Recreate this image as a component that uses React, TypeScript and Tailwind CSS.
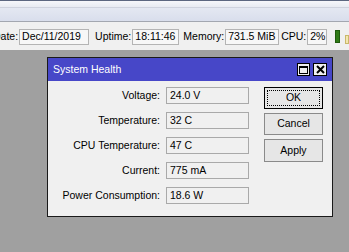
function StatusField({ label, value, width }: { label: string; value: string; width: string }) {
  return (
    <div className="flex items-center">
      <span className="mr-px">{label}</span>
      <div className={`${width} h-[16px] border border-[#b4b4b4] bg-[#f7f7f7] flex items-center pl-[2px] leading-none`}>
        {value}
      </div>
    </div>
  );
}

const rows = [
  { label: 'Voltage:', value: '24.0 V' },
  { label: 'Temperature:', value: '32 C' },
  { label: 'CPU Temperature:', value: '47 C' },
  { label: 'Current:', value: '775 mA' },
  { label: 'Power Consumption:', value: '18.6 W' },
];

function App() {
  return (
    <div className="w-[349px] h-[252px] overflow-hidden flex flex-col bg-[#a0a0a0] font-['Liberation_Sans',Arial,sans-serif] text-black">
      {/* toolbar strip */}
      <div className="h-[22px] flex flex-col border-b border-[#a3a7b0]">
        <div className="h-px bg-[#5c6780]" />
        <div className="h-[6px] bg-gradient-to-b from-[#f6f7fa] to-[#e8ebf2]" />
        <div className="h-px bg-[#cfd3de]" />
        <div className="flex-1 bg-gradient-to-b from-[#e4e8f2] to-[#d9deec]" />
      </div>

      {/* status bar */}
      <div className="h-[28px] bg-[#f0f0f0] flex items-center text-[10.5px] -ml-[7px] pt-[1px]">
        <StatusField label="Date:" value="Dec/11/2019" width="w-[70px]" />
        <div className="ml-[6px]">
          <StatusField label="Uptime:" value="18:11:46" width="w-[47px]" />
        </div>
        <div className="ml-[4px]">
          <StatusField label="Memory:" value="731.5 MiB" width="w-[54px]" />
        </div>
        <div className="ml-[2px]">
          <StatusField label="CPU:" value="2%" width="w-[20px]" />
        </div>
        <div className="ml-[8px] w-[10px] h-[13px] bg-[#2f7a16] border border-[#1e5a0c]" />
        <div className="ml-[5px] mt-[6px] w-[6px] h-[9px] bg-[#f3e7b0] border border-[#c9b86a]" />
      </div>

      {/* desktop */}
      <div className="flex-1 pl-[47px] pt-[7px]">
        <div className="w-[286px] h-[160px] border border-[#1a1a1a] bg-[#f0f0f0] flex flex-col">
          <div className="h-[23px] bg-[#4747c8] flex items-center pl-[5px] pr-[5px]">
            <span className="text-white text-[10.5px] flex-1 pt-[1px]">System Health</span>
            <div className="w-[13px] h-[13px] bg-[#f0f0f0] border border-black flex items-center justify-center">
              <div className="w-[9px] h-[8px] border border-black border-t-2" />
            </div>
            <div className="ml-[3px] w-[14px] h-[13px] bg-[#f0f0f0] border border-black flex items-center justify-center">
              <svg width="9" height="9" viewBox="0 0 9 9">
                <path d="M1 1 L8 8 M8 1 L1 8" stroke="black" strokeWidth="2" />
              </svg>
            </div>
          </div>

          <div className="flex pt-[6px]">
            <div className="grid grid-cols-[112px_83px] gap-x-[6px] gap-y-[8px] text-[10.5px]">
              {rows.map((r) => (
                <div key={r.label} className="contents">
                  <div className="h-[17px] flex items-center justify-end">{r.label}</div>
                  <div className="h-[17px] border border-[#a9a9a9] bg-[#f0f0f0] flex items-center pl-[3px]">
                    {r.value}
                  </div>
                </div>
              ))}
            </div>

            <div className="ml-[15px] flex flex-col gap-[4px] text-[10.5px]">
              <div className="w-[59px] h-[22px] border border-black bg-[#e6e6e6] p-[2px]">
                <div className="w-full h-full border border-dotted border-black flex items-center justify-center">
                  OK
                </div>
              </div>
              <div className="w-[59px] h-[22px] border border-[#8a8a8a] bg-[#e6e6e6] flex items-center justify-center">
                Cancel
              </div>
              <div className="w-[59px] h-[23px] border border-[#8a8a8a] bg-[#e6e6e6] flex items-center justify-center">
                Apply
              </div>
            </div>
          </div>
        </div>
      </div>
    </div>
  );
}

export default App;
